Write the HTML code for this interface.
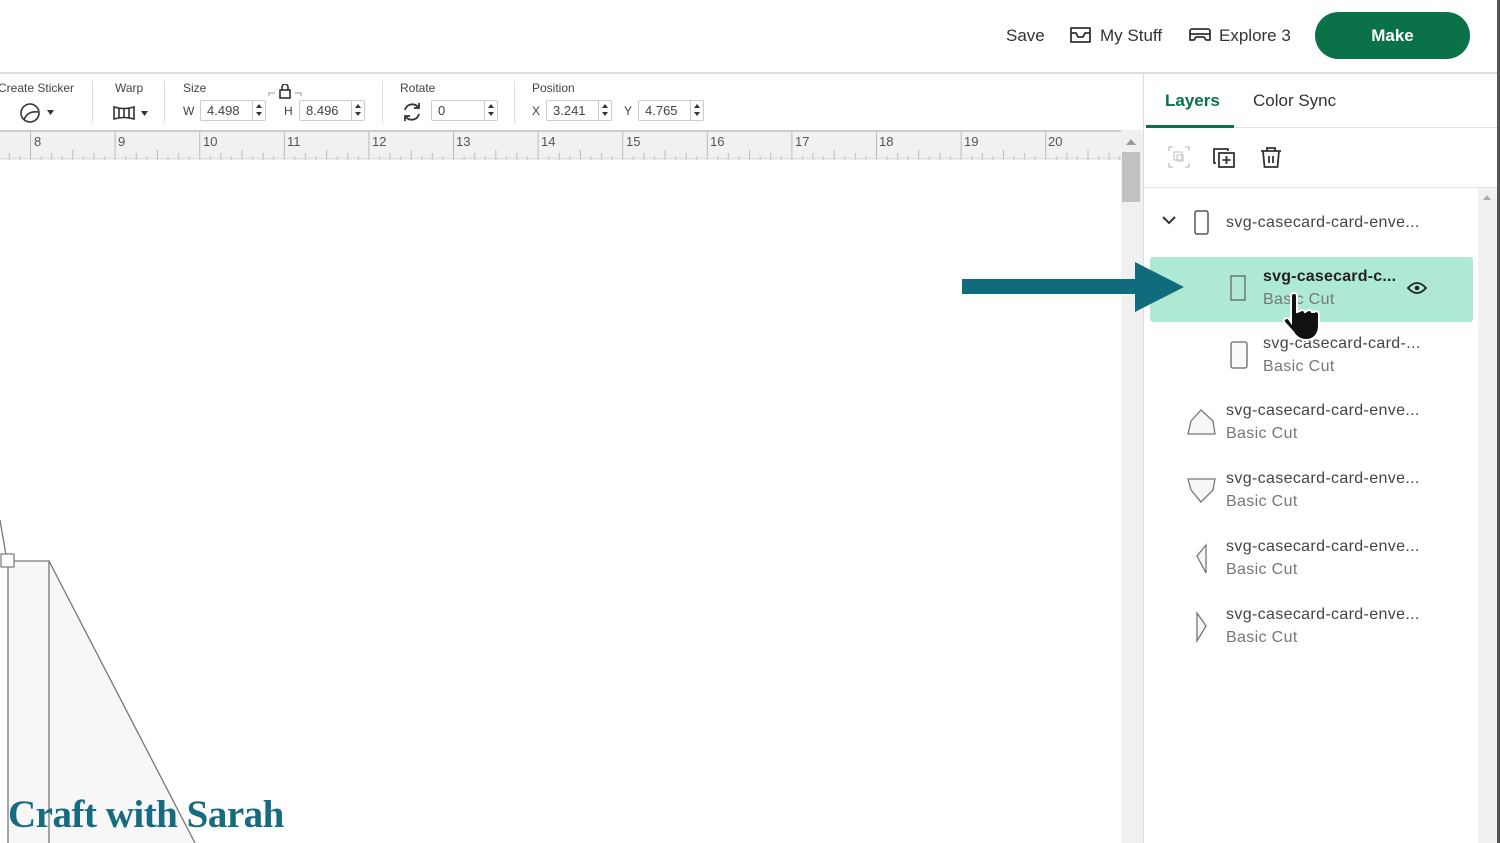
<!DOCTYPE html>
<html><head><meta charset="utf-8">
<style>
*{margin:0;padding:0;box-sizing:border-box}
body{width:1500px;height:843px;position:relative;overflow:hidden;background:#fff;font-family:"Liberation Sans",sans-serif;color:#333}
.a{position:absolute}
.lbl{font-size:12px;color:#444}
.inp{position:absolute;height:21px;border:1px solid #ccc;border-radius:2px;font-size:13px;color:#444;padding:2px 6px;background:#fff}
.spin{position:absolute;top:0;right:0;width:13px;height:19px;border-left:1px solid #ccc}
.spin:before{content:"";position:absolute;left:3px;top:3px;border:3.5px solid transparent;border-bottom:4px solid #333;border-top:0}
.spin:after{content:"";position:absolute;left:3px;top:11px;border:3.5px solid transparent;border-top:4px solid #333;border-bottom:0}
.sep{position:absolute;top:81px;width:1px;height:42px;background:#ddd}
.rn{position:absolute;top:134px;font-size:13px;color:#555}
.t1{position:absolute;font-size:16px;color:#444;letter-spacing:0.35px}
.t2{position:absolute;font-size:16px;color:#777;letter-spacing:0.35px}
</style></head><body>
<!-- header -->
<div class="a" style="left:0;top:72px;width:1497px;height:2px;background:#ddd"></div>
<div class="a" style="left:1006px;top:26px;font-size:17px;color:#333">Save</div>
<svg class="a" style="left:1069px;top:25px" width="23" height="20" viewBox="0 0 23 20"><path d="M2 3h19v14H2z M2 8h5l2 4h5l2-4h5" fill="none" stroke="#333" stroke-width="1.8" stroke-linejoin="round"/></svg>
<div class="a" style="left:1100px;top:26px;font-size:17px;color:#333">My Stuff</div>
<svg class="a" style="left:1188px;top:27px" width="24" height="16" viewBox="0 0 24 16"><path d="M4 2h16a2 2 0 0 1 2 2v9h-4l-2-3H8l-2 3H2V4a2 2 0 0 1 2-2z M2 7h20" fill="none" stroke="#333" stroke-width="1.8" stroke-linejoin="round"/></svg>
<div class="a" style="left:1219px;top:26px;font-size:17px;color:#333">Explore 3</div>
<div class="a" style="left:1315px;top:12px;width:155px;height:47px;border-radius:24px;background:#0b7149;color:#fff;font-weight:bold;font-size:17px;text-align:center;line-height:47px">Make</div>
<div class="a" style="left:1497px;top:0;width:3px;height:843px;background:#555"></div>

<!-- toolbar -->
<div class="a lbl" style="left:-2px;top:81px">Create Sticker</div>
<svg class="a" style="left:19px;top:101px" width="38" height="24" viewBox="0 0 38 24"><circle cx="11" cy="12" r="9" fill="none" stroke="#333" stroke-width="1.6"/><path d="M5 19c2-6 7-9 14-8" fill="none" stroke="#333" stroke-width="1.6"/><path d="M28 9h7l-3.5 5z" fill="#333"/></svg>
<div class="sep" style="left:92px"></div>
<div class="a lbl" style="left:115px;top:81px">Warp</div>
<svg class="a" style="left:112px;top:104px" width="38" height="18" viewBox="0 0 38 18"><path d="M2 3q10 3 20 0v12q-10-3-20 0z M7 4v10 M12 5v9 M17 4v10" fill="none" stroke="#333" stroke-width="1.6"/><path d="M29 7h7l-3.5 5z" fill="#333"/></svg>
<div class="sep" style="left:164px"></div>
<div class="a lbl" style="left:183px;top:81px">Size</div>
<div class="a lbl" style="left:183px;top:104px">W</div>
<div class="inp" style="left:200px;top:100px;width:66px">4.498<div class="spin"></div></div>
<svg class="a" style="left:268px;top:84px" width="34" height="16" viewBox="0 0 34 16"><path d="M1 12V9h6 M33 12V9h-6" fill="none" stroke="#999" stroke-width="1"/><rect x="12" y="6" width="10" height="8" fill="none" stroke="#333" stroke-width="1.6"/><path d="M14 6V3a3 3 0 0 1 6 0v3" fill="none" stroke="#333" stroke-width="1.6"/></svg>
<div class="a lbl" style="left:284px;top:104px">H</div>
<div class="inp" style="left:299px;top:100px;width:66px">8.496<div class="spin"></div></div>
<div class="sep" style="left:382px"></div>
<div class="a lbl" style="left:400px;top:81px">Rotate</div>
<svg class="a" style="left:401px;top:101px" width="22" height="22" viewBox="0 0 22 22"><path d="M4 9a7.5 7.5 0 0 1 13-3 M18 13a7.5 7.5 0 0 1-13 3" fill="none" stroke="#333" stroke-width="1.8"/><path d="M18 2v5h-5 M4 20v-5h5" fill="none" stroke="#333" stroke-width="1.8"/></svg>
<div class="inp" style="left:431px;top:100px;width:67px">0<div class="spin"></div></div>
<div class="sep" style="left:514px"></div>
<div class="a lbl" style="left:532px;top:81px">Position</div>
<div class="a lbl" style="left:532px;top:104px">X</div>
<div class="inp" style="left:546px;top:100px;width:66px">3.241<div class="spin"></div></div>
<div class="a lbl" style="left:624px;top:104px">Y</div>
<div class="inp" style="left:638px;top:100px;width:66px">4.765<div class="spin"></div></div>

<!-- ruler -->
<svg class="a" style="left:0;top:130px" width="1121" height="30">
<defs><pattern id="rp" x="30" y="0" width="84.6" height="30" patternUnits="userSpaceOnUse">
<rect width="84.6" height="30" fill="#f1f1f1"/>
<path d="M0.5 0v30 M42.8 20v10 M21.65 23v7 M63.95 23v7 M11.1 26v4 M32.2 26v4 M53.4 26v4 M74.5 26v4" stroke="#bbb" stroke-width="1"/>
</pattern></defs>
<rect width="1121" height="30" fill="url(#rp)"/>
<rect width="1121" height="2" fill="#ccc"/>
<rect y="28" width="1121" height="1" fill="#ddd"/>
</svg>
<div class="rn" style="left:34px">8</div><div class="rn" style="left:118px">9</div><div class="rn" style="left:203px">10</div><div class="rn" style="left:287px">11</div><div class="rn" style="left:372px">12</div><div class="rn" style="left:456px">13</div><div class="rn" style="left:541px">14</div><div class="rn" style="left:626px">15</div><div class="rn" style="left:710px">16</div><div class="rn" style="left:795px">17</div><div class="rn" style="left:879px">18</div><div class="rn" style="left:964px">19</div><div class="rn" style="left:1048px">20</div>

<!-- canvas scrollbar -->
<div class="a" style="left:1121px;top:130px;width:22px;height:713px;background:#f0f0f0"></div>
<div class="a" style="left:1126px;top:139px;border:5px solid transparent;border-bottom:6px solid #999;border-top:0"></div>
<div class="a" style="left:1122px;top:152px;width:18px;height:50px;background:#c1c1c1"></div>
<div class="a" style="left:1143px;top:74px;width:1px;height:769px;background:#ddd"></div>

<!-- canvas shapes -->
<svg class="a" style="left:0;top:500px" width="300" height="343">
<path d="M8 61H49L195 343H8z" fill="#f7f7f7"/>
<path d="M0 20L6 55 M8 61H49L195 343 M8 61V343 M49 61V343" fill="none" stroke="#777" stroke-width="1.3"/>
<rect x="1" y="54" width="13" height="13" fill="#fff" stroke="#777" stroke-width="1.2"/>
</svg>
<div class="a" style="left:8px;top:792px;font-family:'Liberation Serif',serif;font-weight:bold;font-size:39px;color:#176b81;letter-spacing:-0.5px">Craft with Sarah</div>

<!-- layers panel -->
<div class="a" style="left:1165px;top:91px;font-size:17px;font-weight:bold;color:#0b7149">Layers</div>
<div class="a" style="left:1253px;top:91px;font-size:17px;color:#333">Color Sync</div>
<div class="a" style="left:1146px;top:125px;width:88px;height:3px;background:#0b7149"></div>
<div class="a" style="left:1234px;top:127px;width:263px;height:1px;background:#e3e3e3"></div>
<svg class="a" style="left:1167px;top:145px" width="125" height="26" viewBox="0 0 125 26">
<path d="M2 6V2h4 M18 2h4v4 M22 18v4h-4 M6 22H2v-4" fill="none" stroke="#ccc" stroke-width="1.5"/><rect x="7" y="7" width="8" height="8" fill="none" stroke="#ccc" stroke-width="1.3"/><rect x="10" y="10" width="6" height="6" fill="none" stroke="#ccc" stroke-width="1.3"/>
<path d="M49 18h-2V4h14v2" fill="none" stroke="#333" stroke-width="1.8"/><rect x="52" y="8" width="15" height="14" fill="none" stroke="#333" stroke-width="1.8"/><path d="M59.5 11v8 M55.5 15h8" stroke="#333" stroke-width="1.8"/>
<path d="M94 6h20 M100 6V3h8v3 M96 6l1.5 16h13L112 6 M102 11v7 M106 11v7" fill="none" stroke="#333" stroke-width="1.8"/>
</svg>
<div class="a" style="left:1144px;top:187px;width:353px;height:1px;background:#e3e3e3"></div>
<div class="a" style="left:1478px;top:188px;width:19px;height:655px;background:#f1f1f1"></div>
<div class="a" style="left:1483px;top:195px;border:4px solid transparent;border-bottom:5px solid #aaa;border-top:0"></div>

<svg class="a" style="left:1160px;top:210px" width="50" height="26"><path d="M3 7l6 6 6-6" fill="none" stroke="#333" stroke-width="2"/><rect x="35" y="1" width="13" height="23" rx="2" fill="#fff" stroke="#555" stroke-width="1.5"/></svg>
<div class="t1" style="left:1226px;top:214px">svg-casecard-card-enve...</div>

<div class="a" style="left:1150px;top:257px;width:323px;height:65px;background:#aee9d4;border-radius:3px"></div>
<svg class="a" style="left:1230px;top:275px" width="18" height="28"><rect x="1" y="1" width="14" height="24" fill="none" stroke="#666" stroke-width="1.3"/></svg>
<div class="a" style="left:1263px;top:268px;font-size:16px;font-weight:bold;color:#222;letter-spacing:0.2px">svg-casecard-c...</div>
<div class="t2" style="left:1263px;top:291px">Basic Cut</div>
<svg class="a" style="left:1407px;top:281px" width="20" height="14"><path d="M1 7q9-10 18 0q-9 10-18 0z" fill="none" stroke="#222" stroke-width="1.8"/><circle cx="10" cy="7" r="2.3" fill="#222"/></svg>

<svg class="a" style="left:1230px;top:341px" width="18" height="28"><rect x="1" y="1" width="16" height="26" rx="2" fill="#fafafa" stroke="#666" stroke-width="1.3"/></svg>
<div class="t1" style="left:1263px;top:335px">svg-casecard-card-...</div>
<div class="t2" style="left:1263px;top:358px">Basic Cut</div>

<svg class="a" style="left:1280px;top:292px" width="42" height="52" viewBox="0 0 42 52"><path d="M11 4a3 3 0 0 1 6 0v16l3-1a3 3 0 0 1 5 1l2-1a3 3 0 0 1 5 1l2 0a3 3 0 0 1 5 2v12c0 8-5 14-13 14c-6 0-10-3-13-8L4 30a3 3 0 0 1 5-3l2 3z" fill="#111" stroke="#fff" stroke-width="2"/></svg>

<svg class="a" style="left:1186px;top:407px" width="32" height="30"><path d="M2 27L5 14L15 3L27 14L29 27z" fill="#f7f7f7" stroke="#777" stroke-width="1.3"/></svg>
<div class="t1" style="left:1226px;top:402px">svg-casecard-card-enve...</div>
<div class="t2" style="left:1226px;top:425px">Basic Cut</div>

<svg class="a" style="left:1186px;top:477px" width="32" height="28"><path d="M2 2H29L27 13L15 25L5 13z" fill="#f7f7f7" stroke="#777" stroke-width="1.3"/></svg>
<div class="t1" style="left:1226px;top:470px">svg-casecard-card-enve...</div>
<div class="t2" style="left:1226px;top:493px">Basic Cut</div>

<svg class="a" style="left:1194px;top:543px" width="16" height="32"><path d="M12 2L3 13L12 30z" fill="#f7f7f7" stroke="#777" stroke-width="1.3"/></svg>
<div class="t1" style="left:1226px;top:538px">svg-casecard-card-enve...</div>
<div class="t2" style="left:1226px;top:561px">Basic Cut</div>

<svg class="a" style="left:1194px;top:611px" width="16" height="32"><path d="M3 2L12 15L3 30z" fill="#f7f7f7" stroke="#777" stroke-width="1.3"/></svg>
<div class="t1" style="left:1226px;top:606px">svg-casecard-card-enve...</div>
<div class="t2" style="left:1226px;top:629px">Basic Cut</div>

<!-- arrow on top -->
<svg class="a" style="left:960px;top:260px;z-index:5" width="230" height="55"><path d="M2 19H175V2L224 27L175 52V34H2z" fill="#106b7c"/></svg>
</body></html>
